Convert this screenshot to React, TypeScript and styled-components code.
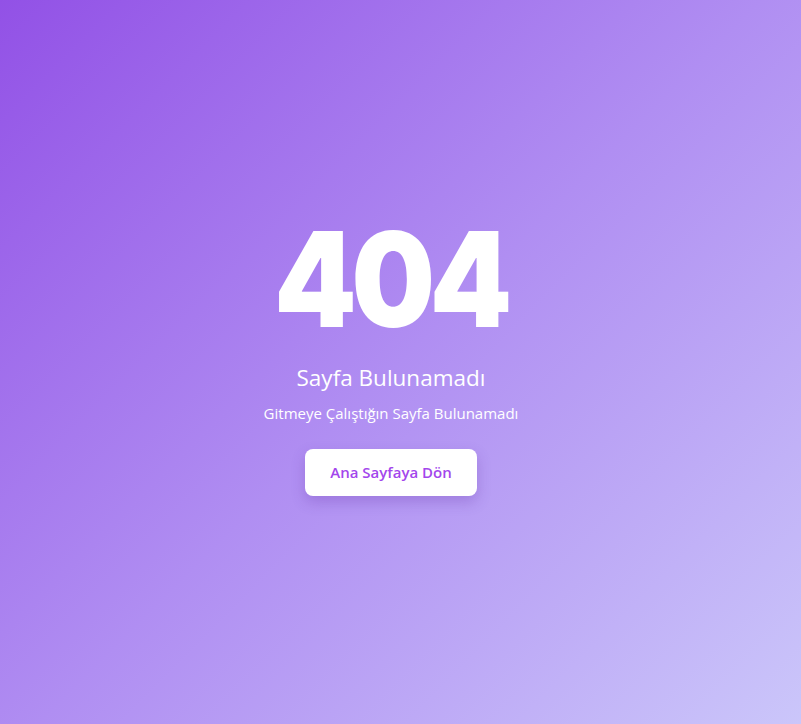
import React from "react";
import styled, { createGlobalStyle } from "styled-components";

const Global = createGlobalStyle`
  html, body { margin: 0; padding: 0; height: 100%; }
  body { font-family: "Open Sans", "Noto Sans", sans-serif; }
`;

const Page = styled.main`
  min-height: 100vh;
  box-sizing: border-box;
  padding: 0 19px 16px 0;
  display: flex;
  flex-direction: column;
  align-items: center;
  justify-content: center;
  background: linear-gradient(135deg, #9251e6 0%, #b08ef2 50%, #cbc6fa 100%);
  color: #fff;
  text-align: center;
`;

const Code = styled.h1`
  margin: 0;
  font-family: Inter, "Noto Sans", sans-serif;
  font-weight: 900;
  font-size: 132px;
  line-height: 1;
  letter-spacing: -6px;
  transform: scaleX(0.89);
`;

const Title = styled.h2`
  margin: 17px 0 0;
  font-weight: 400;
  font-size: 22.5px;
  line-height: 32px;
`;

const Subtitle = styled.p`
  margin: 8px 0 0;
  font-size: 15px;
  line-height: 22px;
`;

const Button = styled.a`
  margin-top: 25px;
  display: inline-flex;
  align-items: center;
  justify-content: center;
  width: 172px;
  height: 47px;
  border-radius: 8px;
  background: #fff;
  color: #a346ec;
  font-weight: 600;
  font-size: 15px;
  text-decoration: none;
  box-shadow: 0 6px 14px rgba(90, 40, 160, 0.25);
`;

export default function App() {
  return (
    <>
      <Global />
      <Page>
        <Code>404</Code>
        <Title>Sayfa Bulunamadı</Title>
        <Subtitle>Gitmeye Çalıştığın Sayfa Bulunamadı</Subtitle>
        <Button href="#">Ana Sayfaya Dön</Button>
      </Page>
    </>
  );
}
